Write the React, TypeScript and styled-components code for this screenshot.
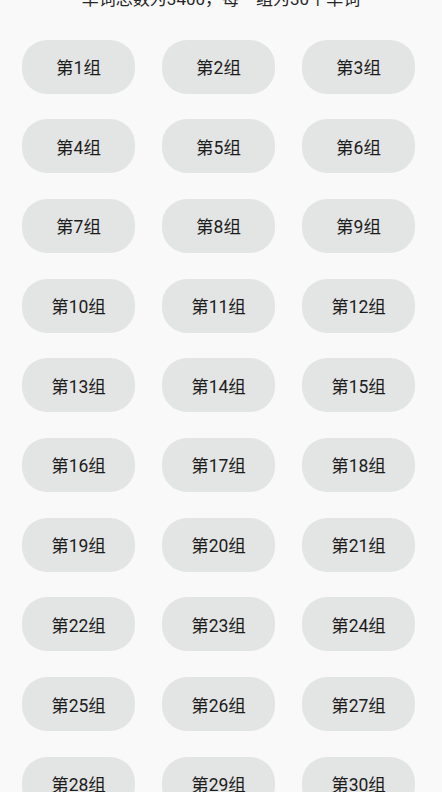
import React from "react";
import styled, { createGlobalStyle } from "styled-components";

const Global = createGlobalStyle`
  html, body {
    margin: 0;
    padding: 0;
    background: #f9f9f9;
    overflow: hidden;
  }
  body {
    font-family: Roboto, "Noto Sans CJK SC", sans-serif;
  }
`;

const Page = styled.div`
  width: 442px;
  height: 792px;
  overflow: hidden;
  background: #f9f9f9;
`;

const Scroller = styled.div`
  margin-top: -13px;
  display: flex;
  flex-direction: column;
`;

const Header = styled.div`
  height: 24px;
  line-height: 24px;
  font-size: 17px;
  color: #262626;
  text-align: center;
`;

const Grid = styled.div`
  margin-top: 28.5px;
  padding: 0 27px 0 22px;
  display: grid;
  grid-template-columns: repeat(3, 113px);
  column-gap: 27px;
  row-gap: 25.7px;
`;

const GroupButton = styled.button`
  height: 54px;
  border: none;
  border-radius: 25px;
  background: #e3e4e4;
  color: #1c1c1c;
  font-family: Roboto, "Noto Sans CJK SC", sans-serif;
  font-size: 17.5px;
  padding: 0;
  display: flex;
  align-items: center;
  justify-content: center;
`;

export default function App() {
  const groups = Array.from({ length: 30 }, (_, i) => i + 1);
  return (
    <Page>
      <Global />
      <Scroller>
        <Header>单词总数为3400，每一组为30个单词</Header>
        <Grid>
          {groups.map((n) => (
            <GroupButton key={n}>第{n}组</GroupButton>
          ))}
        </Grid>
      </Scroller>
    </Page>
  );
}
